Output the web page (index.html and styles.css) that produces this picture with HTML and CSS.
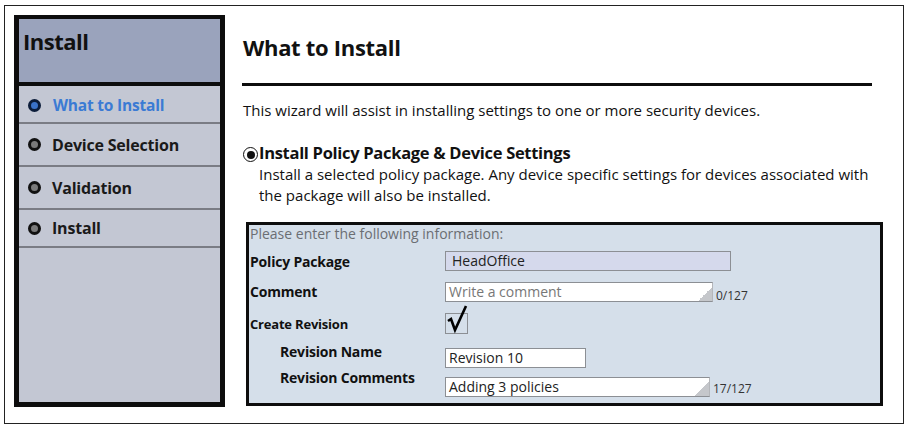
FILE: index.html
```html
<!DOCTYPE html>
<html lang="en">
<head>
    <meta charset="UTF-8">
    <title>Install - What to Install</title>
    <link rel="stylesheet" href="styles.css">
</head>
<body>
    <div class="frame">
        <!-- Wizard steps -->
        <aside class="sidebar">
            <div class="sidebar-head">Install</div>
            <ul class="steps">
                <li class="step active"><span class="dot"></span>What to Install</li>
                <li class="step tall"><span class="dot"></span>Device Selection</li>
                <li class="step tall"><span class="dot"></span>Validation</li>
                <li class="step"><span class="dot"></span>Install</li>
            </ul>
        </aside>

        <!-- Step content -->
        <main class="main">
            <h1>What to Install</h1>
            <hr class="rule">
            <p class="intro">This wizard will assist in installing settings to one or more security devices.</p>

            <div class="option">
                <span class="radio"><span class="radio-dot"></span></span>
                <span class="option-title">Install Policy Package &amp; Device Settings</span>
            </div>
            <p class="option-desc">Install a selected policy package. Any device specific settings for devices associated with the package will also be installed.</p>

            <div class="form-box">
                <div class="form-hint">Please enter the following information:</div>
                <div class="row r-pkg">
                    <span class="label">Policy Package</span>
                    <span class="field field-pkg">HeadOffice</span>
                </div>
                <div class="row r-comment">
                    <span class="label">Comment</span>
                    <span class="field field-area w-comment placeholder">Write a comment</span>
                    <span class="count">0/127</span>
                </div>
                <div class="row r-check">
                    <span class="label small">Create Revision</span>
                    <span class="checkbox">
                        <svg class="tick" width="26" height="30" viewBox="0 0 26 30">
                            <path d="M4 16 L7 14 L11 25 L22 1" fill="none" stroke="#000" stroke-width="2.6" stroke-linejoin="miter"/>
                        </svg>
                    </span>
                </div>
                <div class="row r-name">
                    <span class="label indent">Revision Name</span>
                    <span class="field field-name">Revision 10</span>
                </div>
                <div class="row r-rcomm">
                    <span class="label indent">Revision Comments</span>
                    <span class="field field-area w-rcomm">Adding 3 policies</span>
                    <span class="count">17/127</span>
                </div>
            </div>
        </main>
    </div>
</body>
</html>
```

FILE: styles.css
```css
* {
    margin: 0;
    padding: 0;
    box-sizing: border-box;
    font-family: 'Open Sans', 'Noto Sans', sans-serif;
}

body {
    background-color: #fff;
    color: #111;
}

.frame {
    width: 900px;
    height: 419px;
    margin: 5px 0 0 4px;
    border: 1px solid #222;
    display: flex;
    align-items: flex-start;
    padding: 9px 0 0 9px;
}

/* sidebar */

.sidebar {
    width: 211px;
    height: 392px;
    border: 5px solid #0d0d0d;
    border-top-width: 4px;
    background-color: #c3c7d3;
    flex-shrink: 0;
}

.sidebar-head {
    height: 67px;
    background-color: #9aa3bc;
    border-bottom: 4px solid #0d0d0d;
    font-size: 22px;
    font-weight: 700;
    letter-spacing: -0.5px;
    padding: 7px 0 0 4px;
    line-height: 30px;
}

.steps {
    list-style: none;
}

.step {
    height: 38px;
    border-bottom: 2px solid #7a7c84;
    display: flex;
    align-items: center;
    font-size: 16px;
    font-weight: 700;
    letter-spacing: -0.2px;
    color: #1a1a1a;
    padding-left: 9px;
}

.step.tall {
    height: 43px;
}

.step.active {
    color: #3b7bd4;
    font-size: 15.5px;
    padding-top: 2px;
}

.dot {
    width: 13px;
    height: 13px;
    border-radius: 50%;
    border: 3px solid #111;
    background-color: #7a7a7a;
    margin-right: 11px;
    flex-shrink: 0;
}

.step.active .dot {
    background-color: #3a72c8;
    border-color: #0c1d3a;
    margin-right: 12px;
}

/* main */

.main {
    margin-left: 17px;
    width: 645px;
}

h1 {
    font-size: 22px;
    font-weight: 700;
    letter-spacing: -0.3px;
    margin-top: 16px;
    line-height: 32px;
    padding-left: 1px;
}

.rule {
    border: none;
    border-top: 3px solid #0d0d0d;
    width: 630px;
    margin-top: 20px;
}

.intro {
    font-size: 15px;
    margin-top: 14px;
    line-height: 20px;
    padding-left: 1px;
}

.option {
    display: flex;
    align-items: center;
    margin-top: 22px;
    padding-left: 1px;
}

.radio {
    width: 15px;
    height: 15px;
    border: 1.5px solid #111;
    border-radius: 50%;
    display: flex;
    align-items: center;
    justify-content: center;
    margin-right: 1px;
    margin-top: 3px;
}

.radio-dot {
    width: 8px;
    height: 8px;
    border-radius: 50%;
    background-color: #111;
}

.option-title {
    font-size: 16.5px;
    font-weight: 700;
    letter-spacing: -0.3px;
    line-height: 22px;
}

.option-desc {
    font-size: 15px;
    line-height: 21px;
    margin-left: 17px;
    width: 615px;
}

/* form */

.form-box {
    margin-top: 16px;
    margin-left: 4px;
    width: 637px;
    height: 184px;
    border: 3px solid #0d0d0d;
    background-color: #d5dfea;
}

.form-hint {
    font-size: 14px;
    color: #6b6e73;
    line-height: 18px;
    padding-left: 1px;
}

.row {
    display: flex;
    align-items: center;
}

.r-pkg { margin-top: 8px; }
.r-comment { margin-top: 8px; }
.r-check { margin-top: 9px; }
.r-name { margin-top: 14px; }
.r-rcomm { margin-top: 9px; }

.label {
    width: 196px;
    font-size: 14px;
    font-weight: 700;
    letter-spacing: -0.2px;
    flex-shrink: 0;
    padding-left: 1px;
}

.label.small {
    font-size: 13px;
}

.label.indent {
    padding-left: 31px;
}

.r-name .label {
    margin-top: -14px;
}

.r-rcomm .label {
    margin-top: -20px;
}

.field {
    height: 20px;
    border: 1px solid #8c8f94;
    background-color: #fff;
    font-size: 14px;
    line-height: 18px;
    padding-left: 3px;
    color: #222;
    position: relative;
}

.field-pkg {
    width: 286px;
    background-color: #d5d9ec;
    padding-left: 6px;
}

.field-name {
    width: 141px;
}

.field-area {
    border-right-color: #b4b6ba;
}

.field-area::after {
    content: "";
    position: absolute;
    right: 0;
    bottom: 0;
    width: 14px;
    height: 14px;
    background: linear-gradient(135deg, transparent 50%, #c5c7cb 50%);
}

.w-comment {
    width: 268px;
}

.w-rcomm {
    width: 265px;
}

.placeholder {
    color: #777;
}

.count {
    font-size: 12px;
    color: #333;
    margin-left: 3px;
    margin-top: 8px;
}

.r-rcomm .count {
    margin-top: 3px;
}

.checkbox {
    width: 23px;
    height: 21px;
    border: 1px solid #8c8f94;
    position: relative;
}

.tick {
    position: absolute;
    left: -2px;
    top: -9px;
    overflow: visible;
}
```
